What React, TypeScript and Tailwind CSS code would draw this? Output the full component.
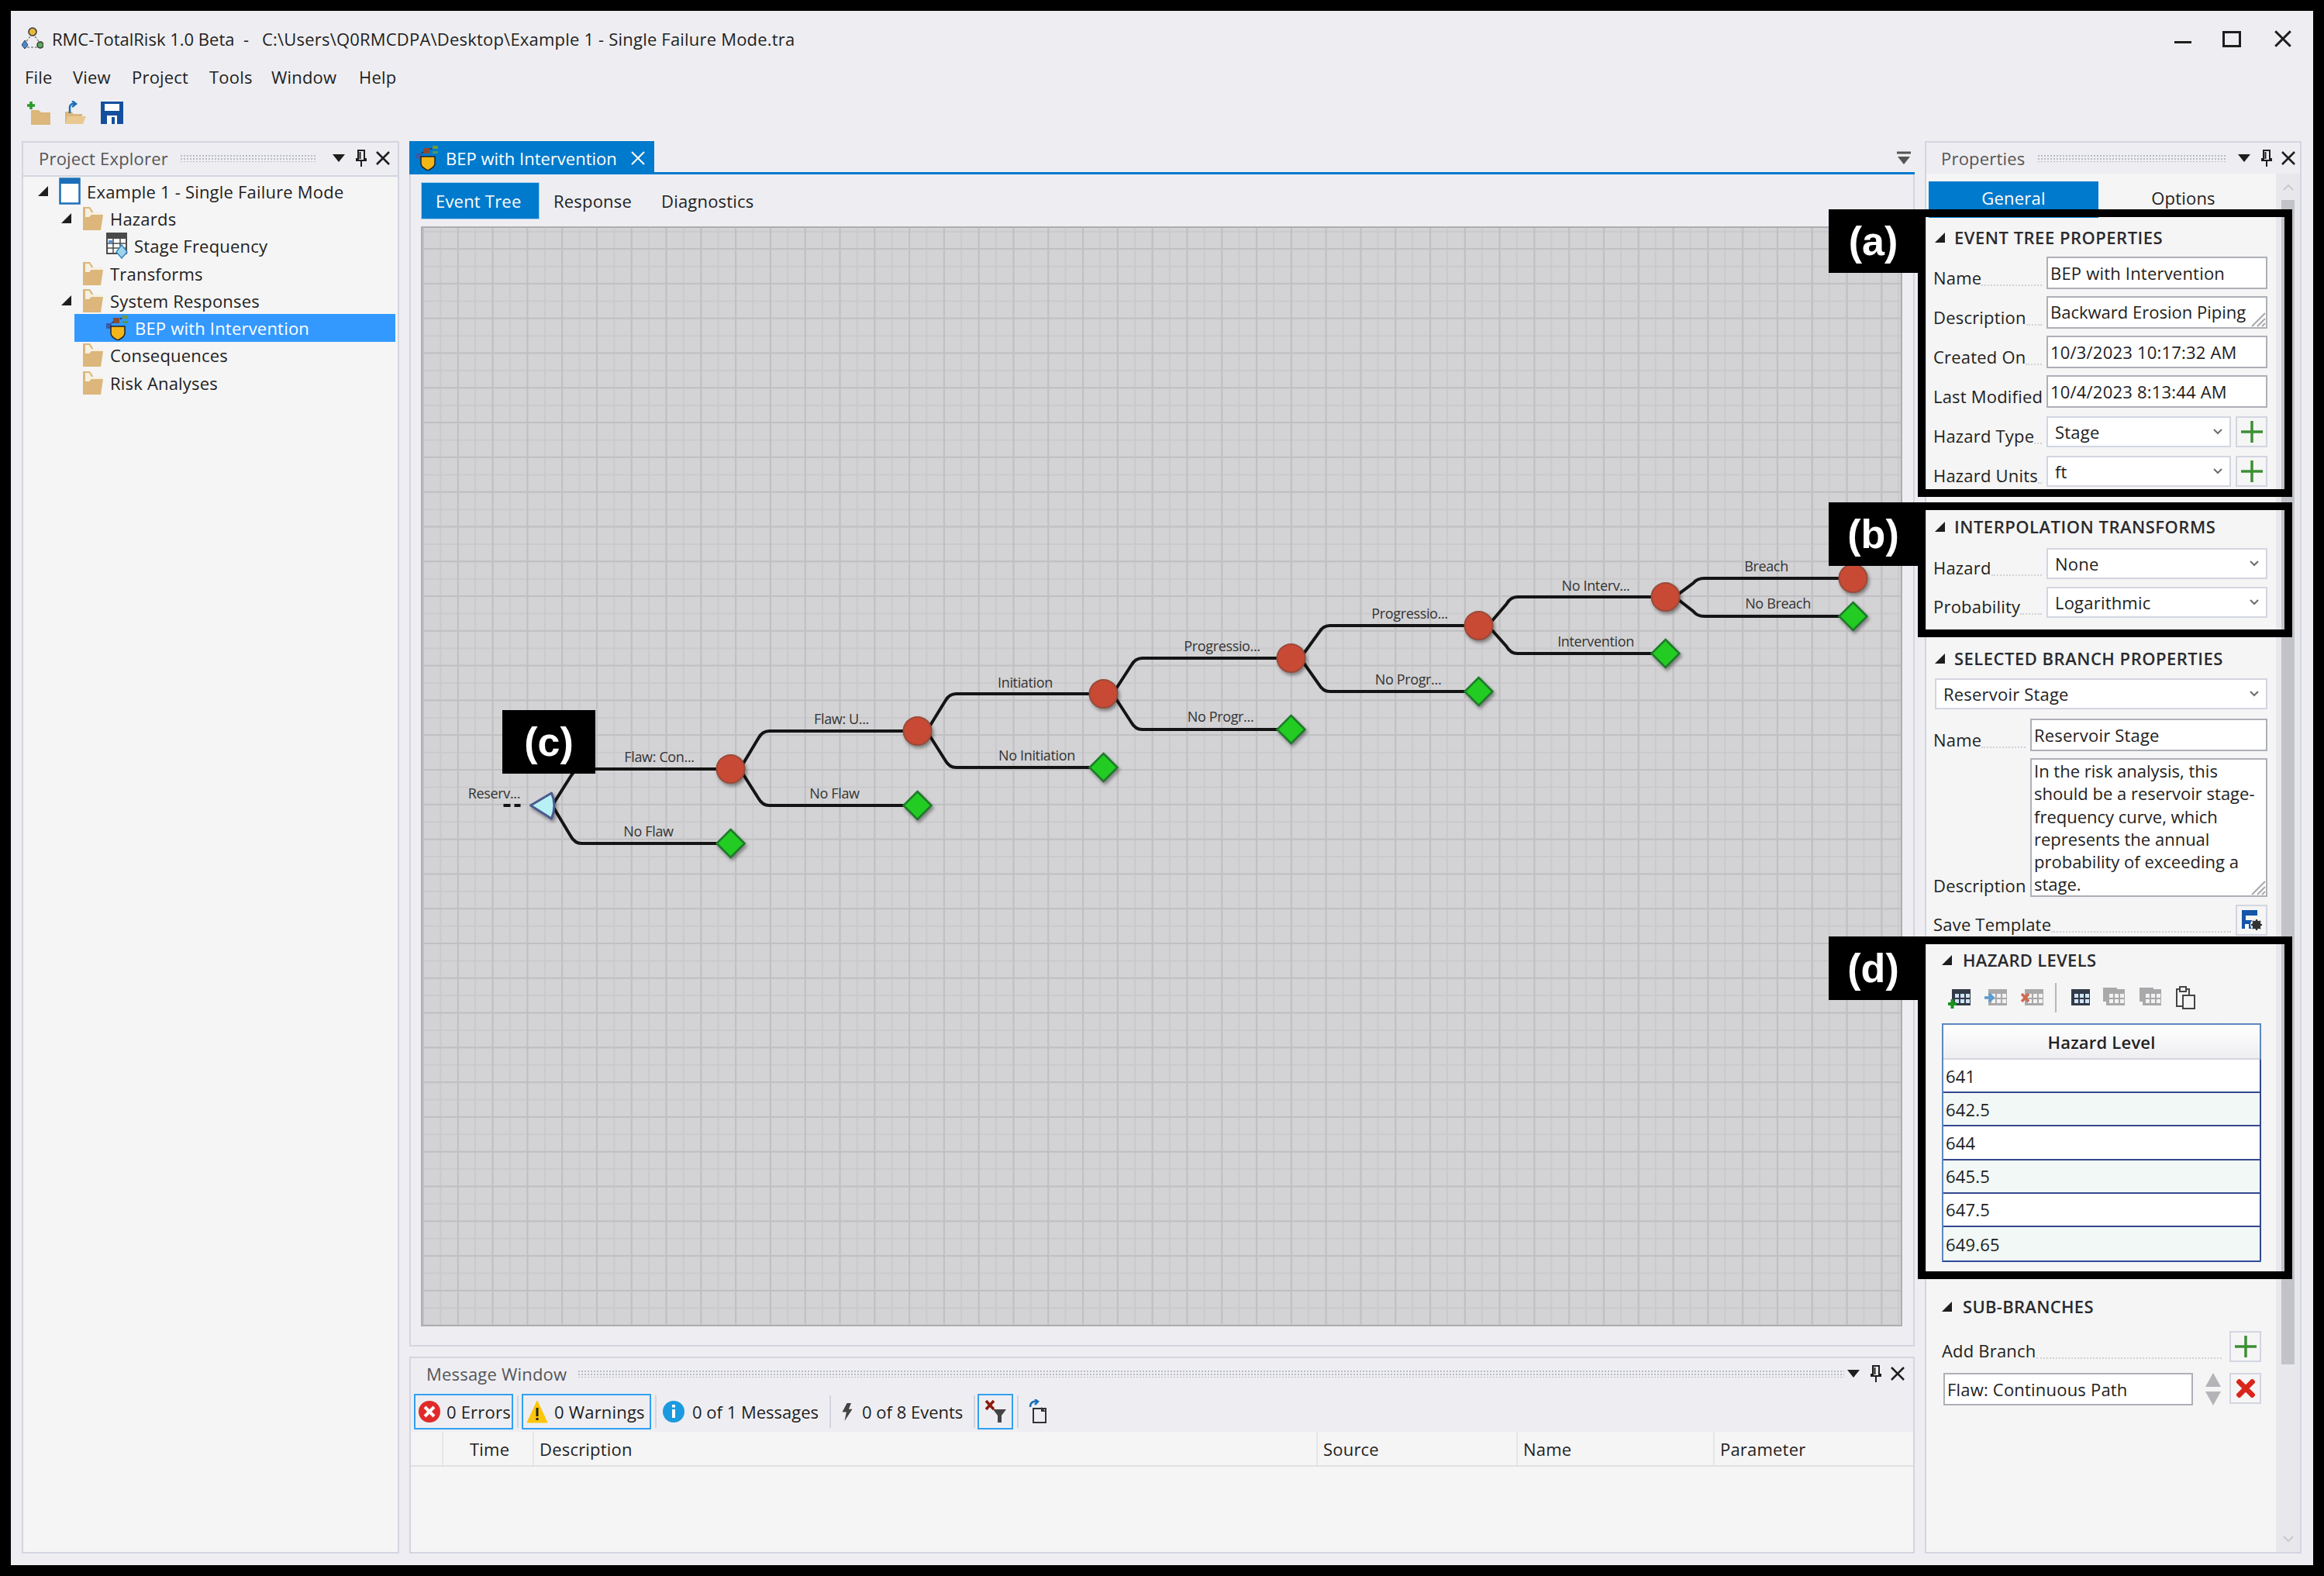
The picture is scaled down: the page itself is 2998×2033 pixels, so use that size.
import React from "react";

const Tri = ({ className = "" }: { className?: string }) => (
  <svg width="13" height="13" viewBox="0 0 13 13" className={className}><polygon points="13,0 13,13 0,13" fill="#1e1e1e" /></svg>
);

const Folder = () => (
  <svg width="28" height="32" viewBox="0 0 28 32" className="shrink-0">
    <path d="M1 1h9l4 6v24H1z" fill="#dcb67a" />
    <path d="M4 3h5l3 5h14v15H4z" fill="#f6f0e2" />
    <path d="M1 31V14h8l3-3h15l-3 20z" fill="#dcb67a" />
  </svg>
);

const WinIcon = () => (
  <svg width="28" height="35" viewBox="0 0 28 35" className="shrink-0">
    <rect x="1.5" y="1.5" width="25" height="32" fill="#fff" stroke="#1b6fb8" strokeWidth="2.5" />
    <rect x="1" y="1" width="26" height="7" fill="#1b6fb8" />
  </svg>
);

const BepIcon = () => (
  <svg width="30" height="32" viewBox="0 0 30 32" className="shrink-0">
    <path d="M3 13L12 6M12 6L22 3" stroke="#222" strokeWidth="1.5" fill="none" strokeDasharray="2 1" />
    <rect x="0" y="10" width="7" height="7" fill="#3b5aa8" />
    <rect x="9" y="3" width="8" height="7" fill="#8a4a32" />
    <rect x="21" y="0" width="7" height="4" fill="#6f9a3c" />
    <rect x="21" y="7" width="7" height="3" fill="#4f9a4f" />
    <path d="M6 14h18v9c0 4-5 7-9 9-4-2-9-5-9-9z" fill="#f3b619" stroke="#222" strokeWidth="1.5" />
  </svg>
);

const StageIcon = () => (
  <svg width="28" height="34" viewBox="0 0 28 34" className="shrink-0">
    <rect x="1" y="1" width="25" height="26" fill="#fff" stroke="#4a4a4a" strokeWidth="2" />
    <rect x="1" y="1" width="25" height="7" fill="#4a4a4a" />
    <path d="M9 8v19M18 8v19M1 14h25M1 20h25" stroke="#4a4a4a" strokeWidth="1.5" />
    <rect x="3" y="10" width="5" height="4" fill="#5b8fd0" />
    <polygon points="20,16 27,25 20,33 13,25" fill="#9fd4ee" stroke="#3b87bb" strokeWidth="1.5" />
  </svg>
);

const AppIcon = () => (
  <svg width="28" height="32" viewBox="0 0 28 32" className="shrink-0">
    <path d="M14 9L4 22M14 9l10 13M7 27h14" stroke="#888" strokeWidth="1.5" strokeDasharray="3 2" />
    <circle cx="14" cy="7" r="5" fill="#e7b93a" stroke="#333" strokeWidth="1.5" />
    <polygon points="4,18 8,24 4,29 0,24" fill="#4f86c6" stroke="#26466d" />
    <circle cx="24" cy="24" r="4" fill="#5ea95e" stroke="#333" strokeWidth="1.5" />
  </svg>
);

const Pin = () => (
  <svg width="14" height="22" viewBox="0 0 14 22"><path d="M3 1h8v11h2v2H1v-2h2zM5.5 3v9M7 14v8" fill="none" stroke="#1e1e1e" strokeWidth="2" /></svg>
);
const XMark = ({ size = 18, color = "#1e1e1e", w = 2.5 }: { size?: number; color?: string; w?: number }) => (
  <svg width={size} height={size} viewBox="0 0 18 18"><path d="M1 1l16 16M17 1L1 17" stroke={color} strokeWidth={w} /></svg>
);
const Grip = ({ className = "" }: { className?: string }) => (
  <div className={`h-[10px] bg-[radial-gradient(#b9bcc4_1px,transparent_1px)] bg-[size:4px_4px] ${className}`} />
);

const HeaderIcons = () => (
  <div className="flex items-center">
    <svg width="16" height="10" viewBox="0 0 16 10"><polygon points="0,0 16,0 8,10" fill="#1e1e1e" /></svg>
    <span className="ml-[14px] flex"><Pin /></span>
    <span className="ml-[12px] flex"><XMark size={18} /></span>
  </div>
);

const Chevron = () => (
  <svg width="12" height="8" viewBox="0 0 12 8" className="shrink-0"><path d="M1 1l5 5 5-5" fill="none" stroke="#6d6d6d" strokeWidth="2" /></svg>
);

const Plus = () => (
  <svg width="28" height="28" viewBox="0 0 28 28"><path d="M14 0v28M0 14h28" stroke="#3c8f34" strokeWidth="3.5" /></svg>
);

const SquareBtn = ({ children, className = "" }: { children: React.ReactNode; className?: string }) => (
  <div className={`w-[41px] h-[40px] border-2 border-[#d3d5e2] bg-[#f5f5f5] flex items-center justify-center shrink-0 ${className}`}>{children}</div>
);

const Input = ({ children, className = "" }: { children: React.ReactNode; className?: string }) => (
  <div className={`h-[42px] border-2 border-[#aeb0b8] bg-white pl-[3px] flex items-center whitespace-nowrap overflow-hidden ${className}`}>{children}</div>
);

const Resize = () => (
  <svg width="22" height="22" viewBox="0 0 22 22" className="absolute right-0 bottom-0"><path d="M21 4L4 21M21 11L11 21M21 17L17 21" stroke="#a8a8a8" strokeWidth="2" /></svg>
);

const Combo = ({ children, className = "" }: { children: React.ReactNode; className?: string }) => (
  <div className={`h-[40px] border-2 border-[#d3d5e2] bg-white pl-[9px] pr-[9px] flex items-center justify-between whitespace-nowrap ${className}`}>
    <span>{children}</span>
    <Chevron />
  </div>
);

const Leader = () => <span className="flex-1 min-w-0 mb-[4px] border-b-2 border-dotted border-[#d2d2d6]" />;

const Field = ({ label, h = "h-[42px]", w = "w-[146px]", mt = "mt-[9px]", children }: { label: string; h?: string; w?: string; mt?: string; children: React.ReactNode }) => (
  <div className={`flex items-end ${h} ${mt}`}>
    <div className={`${w} shrink-0 flex items-end pr-[6px] whitespace-nowrap -ml-[2px]`}>
      <span>{label}</span>
      <Leader />
    </div>
    {children}
  </div>
);

const SecTitle = ({ children, className = "h-[50px]" }: { children: React.ReactNode; className?: string }) => (
  <div className={`flex items-center font-semibold text-[#2a2a2e] tracking-[0.5px] ${className}`}>
    <Tri className="mr-[12px]" />
    <span>{children}</span>
  </div>
);

const Frame = ({ label, inset }: { label: string; inset: string }) => (
  <div className={`absolute z-10 border-[10px] border-black pointer-events-none ${inset}`}>
    <div className="absolute right-full -top-[10px] w-[125px] h-[82px] pr-[10px] bg-black text-white flex items-center justify-center [font-family:'Liberation_Sans',sans-serif] font-bold text-[52px] leading-none tracking-normal">
      {label}
    </div>
  </div>
);

type TreeRowProps = { pad: string; tri?: boolean; icon: React.ReactNode; text: string; selected?: boolean; gap?: string };
const TreeRow = ({ pad, tri, icon, text, selected, gap = "ml-[8px]" }: TreeRowProps) => (
  <div className={`h-[35.3px] flex items-center whitespace-nowrap relative ${pad}`}>
    {selected && <div className="absolute left-[66px] right-[3px] top-0 bottom-0 bg-[#3399ff]" />}
    <span className="w-[13px] shrink-0 mr-[14px] relative">{tri && <Tri className="block" />}</span>
    <span className="relative flex items-center">{icon}</span>
    <span className={`relative ${gap} ${selected ? "text-white" : ""}`}>{text}</span>
  </div>
);

const ProjectExplorer = () => (
  <div className="w-[487px] shrink-0 flex flex-col border-2 border-[#d3d5e0]">
    <div className="h-[42px] pl-[20px] pr-[10px] pb-[2px] flex items-center text-[#555558] shrink-0">
      <span className="whitespace-nowrap">Project Explorer</span>
      <Grip className="flex-1 ml-[15px] mr-[22px]" />
      <HeaderIcons />
    </div>
    <div className="flex-1 bg-[#f5f5f5] border-t-2 border-[#d3d5e0] pt-[1px]">
      <TreeRow pad="pl-[19px]" tri icon={<WinIcon />} text="Example 1 - Single Failure Mode" />
      <TreeRow pad="pl-[49px]" tri icon={<Folder />} text="Hazards" />
      <TreeRow pad="pl-[80px]" icon={<StageIcon />} text="Stage Frequency" />
      <TreeRow pad="pl-[49px]" icon={<Folder />} text="Transforms" />
      <TreeRow pad="pl-[49px]" tri icon={<Folder />} text="System Responses" />
      <TreeRow pad="pl-[80px]" icon={<BepIcon />} text="BEP with Intervention" selected gap="ml-[7px]" />
      <TreeRow pad="pl-[49px]" icon={<Folder />} text="Consequences" />
      <TreeRow pad="pl-[49px]" icon={<Folder />} text="Risk Analyses" />
    </div>
  </div>
);

const circles: [number, number][] = [[942, 992], [1183, 943], [1423, 895], [1665, 849], [1907, 807], [2148, 770], [2390, 746]];
const diamonds: [number, number][] = [[942, 1088], [1183, 1039], [1423, 990], [1665, 941], [1907, 892], [2148, 843], [2390, 795]];
const parents: [number, number][] = [[700, 1039], ...circles.slice(0, 6)];
const labels: [string, number, number][] = [
  ["Reserv...", 637, 1023],
  ["Flaw: Con...", 850, 976],
  ["No Flaw", 836, 1072],
  ["Flaw: U...", 1085, 927],
  ["No Flaw", 1076, 1023],
  ["Initiation", 1322, 880],
  ["No Initiation", 1337, 974],
  ["Progressio...", 1576, 833],
  ["No Progr...", 1574, 924],
  ["Progressio...", 1818, 791],
  ["No Progr...", 1816, 876],
  ["No Interv...", 2058, 755],
  ["Intervention", 2058, 827],
  ["Breach", 2278, 730],
  ["No Breach", 2293, 778],
];

const branch = (px: number, py: number, tx: number, ty: number) => {
  const s = ty < py ? 1 : -1;
  const d = Math.abs(ty - py);
  const k = Math.min(9, d / 4);
  return `M${px + 12} ${py} L${px + 36} ${ty + s * k} Q${px + 41} ${ty} ${px + 50} ${ty} L${tx} ${ty}`;
};

const Tree = () => (
  <svg viewBox="545 294 1906 1415" className="absolute inset-0 w-full h-full">
    <g fill="none" stroke="#141414" strokeWidth="4">
      {parents.map(([px, py], i) => (
        <g key={i}>
          <path d={branch(px, py, circles[i][0], circles[i][1])} />
          <path d={branch(px, py, diamonds[i][0], diamonds[i][1])} />
        </g>
      ))}
      <path d="M649 1039h9M663 1039h8" strokeWidth="4" />
    </g>
    <g className="drop-shadow-[2px_3px_2px_rgba(0,0,0,0.4)]">
      <path d="M684 1039L711 1023Q718 1039 711 1056Z" fill="#b8f1f5" stroke="#4a5a90" strokeWidth="3" strokeLinejoin="round" />
      {circles.map(([x, y], i) => (
        <circle key={i} cx={x} cy={y} r="18" fill="#c84a34" stroke="#9a4a3a" strokeWidth="2" />
      ))}
      {diamonds.map(([x, y], i) => (
        <polygon key={i} points={`${x},${y - 18} ${x + 18},${y} ${x},${y + 18} ${x - 18},${y}`} fill="#22cc22" stroke="#1e7a2a" strokeWidth="2.5" />
      ))}
    </g>
    {labels.map(([t, x, y], i) => (
      <text key={i} x={x} y={y} textAnchor="middle" dominantBaseline="central" className="text-[18px] tracking-[-0.35px] fill-[#333]">{t}</text>
    ))}
  </svg>
);

const DocPanel = () => (
  <div className="h-[1512px] shrink-0 border-x-2 border-b-2 border-[#d3d5e0] pt-[10px] pl-[13px] pr-[14px] flex flex-col">
    <div className="flex items-stretch h-[48px] shrink-0 whitespace-nowrap">
      <div className="w-[153px] bg-[#007acc] text-white border border-[#a5cfee] flex items-center pl-[18px]">Event Tree</div>
      <div className="w-[139px] pl-[18px] flex items-center">Response</div>
      <div className="ml-[18px] flex items-center">Diagnostics</div>
    </div>
    <div className="relative mt-[9px] h-[1419px] w-[1911px] border-2 border-[#aeaeb0] bg-[#d3d3d5] bg-[linear-gradient(#c0c0c2_2px,transparent_2px),linear-gradient(90deg,#c0c0c2_2px,transparent_2px),linear-gradient(#cacacc_2px,transparent_2px),linear-gradient(90deg,#cacacc_2px,transparent_2px)] bg-[size:44.8px_44.8px,44.8px_44.8px,22.4px_22.4px,22.4px_22.4px] bg-[position:0_26px,0_0,0_4px,0_0]">
      <Tree />
      <div className="absolute left-[103px] top-[622px] w-[120px] h-[82px] bg-black text-white flex items-center justify-center [font-family:'Liberation_Sans',sans-serif] font-bold text-[52px] leading-none tracking-normal">(c)</div>
    </div>
  </div>
);

const Sep = ({ className = "" }: { className?: string }) => <div className={`w-[2px] h-[42px] bg-[#d3d5e0] shrink-0 ${className}`} />;

const MessageWindow = () => (
  <div className="flex-1 mt-[13px] border-2 border-[#d3d5e0] flex flex-col min-h-0">
    <div className="h-[43px] shrink-0 pl-[20px] pr-[11px] pb-[3px] flex items-center text-[#555558]">
      <span className="whitespace-nowrap">Message Window</span>
      <Grip className="flex-1 ml-[14px] mr-[4px]" />
      <HeaderIcons />
    </div>
    <div className="h-[52px] shrink-0 flex items-center pl-[4px] whitespace-nowrap">
      <div className="w-[128px] h-[46px] border-2 border-[#33a0f0] flex items-center pl-[4px]">
        <svg width="28" height="28" viewBox="0 0 28 28"><circle cx="14" cy="14" r="14" fill="#e02a2a" /><path d="M8 8l12 12M20 8L8 20" stroke="#fff" strokeWidth="4" /></svg>
        <span className="ml-[8px]">0 Errors</span>
      </div>
      <Sep className="ml-[5px]" />
      <div className="ml-[4px] w-[167px] h-[46px] border-2 border-[#33a0f0] flex items-center pl-[4px]">
        <svg width="28" height="30" viewBox="0 0 28 30"><polygon points="14,1 27,29 1,29" fill="#fdc60a" stroke="#fdc60a" strokeLinejoin="round" /><path d="M14 10v11M14 23v3" stroke="#222" strokeWidth="3" /></svg>
        <span className="ml-[8px]">0 Warnings</span>
      </div>
      <Sep className="ml-[5px]" />
      <svg width="28" height="28" viewBox="0 0 28 28" className="ml-[8px]"><circle cx="14" cy="14" r="14" fill="#1b9ae0" /><path d="M14 11v11M14 5v3.5" stroke="#fff" strokeWidth="4" /></svg>
      <span className="ml-[10px] w-[162px] tracking-normal">0 of 1 Messages</span>
      <Sep className="ml-[15px]" />
      <svg width="16" height="23" viewBox="0 0 17 30" className="ml-[13px]"><polygon points="8,0 15,0 11,10 17,10 4,30 7,15 0,15" fill="#444" /></svg>
      <span className="ml-[11px] w-[128px] tracking-normal">0 of 8 Events</span>
      <Sep className="ml-[16px]" />
      <div className="ml-[3px] w-[46px] h-[46px] border-2 border-[#33a0f0] flex items-center justify-center">
        <svg width="30" height="30" viewBox="0 0 30 30"><path d="M3 1l10 11M13 1L3 12" stroke="#8b1a0c" strokeWidth="3.5" /><polygon points="12,12 29,12 23,20 23,29 18,29 18,20" fill="#444" /></svg>
      </div>
      <Sep className="ml-[5px]" />
      <svg width="26" height="32" viewBox="0 0 26 32" className="ml-[13px]"><path d="M6 12h16v18H6z" fill="none" stroke="#333" strokeWidth="2" /><path d="M16 10l6 6h-6z" fill="#333" /><path d="M2 10c0-6 4-8 9-7M8 0l4 3-4 4" fill="none" stroke="#1b6fb8" strokeWidth="2.5" /></svg>
    </div>
    <div className="flex-1 bg-[#f5f5f5] min-h-0">
      <div className="h-[45px] flex items-stretch border-b-2 border-[#e1e1e4] whitespace-nowrap">
        <div className="w-[42px] border-r-2 border-[#e6e6e8]" />
        <div className="w-[117px] border-r-2 border-[#e6e6e8] flex items-center pl-[34px]">Time</div>
        <div className="w-[1011px] border-r-2 border-[#e6e6e8] flex items-center pl-[7px]">Description</div>
        <div className="w-[258px] border-r-2 border-[#e6e6e8] flex items-center pl-[7px]">Source</div>
        <div className="w-[254px] border-r-2 border-[#e6e6e8] flex items-center pl-[7px]">Name</div>
        <div className="flex-1 flex items-center pl-[7px]">Parameter</div>
      </div>
    </div>
  </div>
);

const CenterColumn = () => (
  <div className="w-[1942px] shrink-0 flex flex-col">
    <div className="h-[43px] shrink-0 flex relative border-b-[3px] border-[#007acc]">
      <div className="w-[316px] h-[43px] shrink-0 bg-[#007acc] text-white flex items-center pl-[9px] whitespace-nowrap">
        <BepIcon />
        <span className="ml-[8px] w-[220px] tracking-normal">BEP with Intervention</span>
        <span className="ml-[19px] flex"><XMark size={18} color="#fff" w={2} /></span>
      </div>
      <svg width="22" height="18" viewBox="0 0 22 18" className="absolute right-[3px] top-[13px]"><path d="M2 2h18" stroke="#555" strokeWidth="3" /><polygon points="3,7 19,7 11,17" fill="#555" /></svg>
    </div>
    <DocPanel />
    <MessageWindow />
  </div>
);

const TableIcon = ({ color = "#333a48", cell = "#cfe3f8", badge, faded, stacked }: { color?: string; cell?: string; badge?: React.ReactNode; faded?: boolean; stacked?: boolean }) => {
  const ink = faded ? "#a9a9ab" : color;
  const cols = [9, 16, 23];
  const rows = [9, 16];
  return (
    <svg width="30" height="28" viewBox="0 0 30 28" className="shrink-0">
      {stacked && <path d="M1 1h18v4H5v14H1z" fill={ink} />}
      <rect x="5" y="3" width="24" height="21" fill={ink} />
      {cols.map((x) =>
        rows.map((y) => <rect key={`${x}-${y}`} x={x} y={y} width="5" height="5" fill={faded ? "#f2f2f2" : cell} />)
      )}
      {badge}
    </svg>
  );
};

const PropertyPanel = () => (
  <div className="w-[486px] shrink-0 flex flex-col border-2 border-[#d3d5e0] relative">
    <div className="h-[40px] shrink-0 pl-[19px] pr-[6px] flex items-center text-[#555558]">
      <span>Properties</span>
      <Grip className="flex-1 ml-[15px] mr-[16px]" />
      <HeaderIcons />
    </div>
    <div className="flex-1 flex min-h-0">
      <div className="w-[451px] shrink-0 bg-[#f5f5f5] flex flex-col">
        <div className="h-[57px] shrink-0 flex pt-[10px] pl-[3px] pr-[10px]">
          <div className="w-[219px] h-[47px] pb-[5px] bg-[#007acc] text-white flex items-center justify-center">General</div>
          <div className="w-[219px] h-[47px] pb-[5px] flex items-center justify-center">Options</div>
        </div>

        <section className="relative h-[350px] px-[11px]">
          <Frame label="(a)" inset="-left-[11px] -right-[21px] -top-[11px] -bottom-[10px]" />
          <SecTitle>EVENT TREE PROPERTIES</SecTitle>
          <Field label="Name" mt=""><Input className="flex-1">BEP with Intervention</Input></Field>
          <Field label="Description"><Input className="flex-1 relative pb-[3px] tracking-normal">Backward Erosion Piping<Resize /></Input></Field>
          <Field label="Created On"><Input className="flex-1">10/3/2023 10:17:32 AM</Input></Field>
          <Field label="Last Modified"><Input className="flex-1">10/4/2023 8:13:44 AM</Input></Field>
          <Field label="Hazard Type">
            <Combo className="flex-1">Stage</Combo>
            <SquareBtn className="ml-[6px]"><Plus /></SquareBtn>
          </Field>
          <Field label="Hazard Units" h="h-[41px]" mt="mt-[10px]">
            <Combo className="flex-1">ft</Combo>
            <SquareBtn className="ml-[6px]"><Plus /></SquareBtn>
          </Field>
        </section>

        <section className="relative mt-[27px] h-[154px] px-[11px]">
          <Frame label="(b)" inset="-left-[11px] -right-[21px] -top-[10px] -bottom-[10px]" />
          <SecTitle className="h-[42px] mb-[7px]">INTERPOLATION TRANSFORMS</SecTitle>
          <Field label="Hazard" h="h-[40px]" mt=""><Combo className="flex-1">None</Combo></Field>
          <Field label="Probability" h="h-[40px]" mt="mt-[10px]"><Combo className="flex-1">Logarithmic</Combo></Field>
        </section>

        <section className="mt-[13px] h-[393px] px-[11px]">
          <SecTitle className="h-[48px] mb-[2px]">SELECTED BRANCH PROPERTIES</SecTitle>
          <Combo>Reservoir Stage</Combo>
          <Field label="Name" w="w-[125px]" mt="mt-[12px]"><Input className="flex-1">Reservoir Stage</Input></Field>
          <Field label="Description" w="w-[125px]" h="h-[179px]">
            <div className="relative flex-1 h-[179px] border-2 border-[#aeb0b8] bg-white pl-[3px] leading-[29.3px] tracking-normal whitespace-nowrap">
              <div>In the risk analysis, this</div>
              <div>should be a reservoir stage-</div>
              <div>frequency curve, which</div>
              <div>represents the annual</div>
              <div>probability of exceeding a</div>
              <div>stage.</div>
              <Resize />
            </div>
          </Field>
          <div className="flex items-end h-[40px] mt-[10px] -ml-[2px]">
            <span className="whitespace-nowrap">Save Template</span>
            <Leader />
            <SquareBtn className="ml-[6px]">
              <svg width="30" height="30" viewBox="0 0 30 30"><path d="M2 2h20v7H7v6h14v1H2z" fill="#1456a8" /><rect x="2" y="16" width="14" height="10" fill="#1456a8" /><rect x="6" y="20" width="5" height="6" fill="#fff" /><circle cx="21" cy="21" r="8" fill="#f5f5f5" /><circle cx="21" cy="21" r="4" fill="none" stroke="#333" strokeWidth="3.5" /><path d="M21 14v14M14 21h14M16 16l10 10M26 16L16 26" stroke="#333" strokeWidth="2" /></svg>
            </SquareBtn>
          </div>
        </section>

        <section className="relative h-[422px]">
          <Frame label="(d)" inset="-left-[11px] -right-[21px] -top-[10px] -bottom-[10px]" />
          <div className="h-[40px] pl-[20px] flex items-center font-semibold text-[#2a2a2e] tracking-[0.3px]">
            <Tri className="mr-[14px]" />
            <span>HAZARD LEVELS</span>
          </div>
          <div className="h-[38px] mt-[10px] ml-[28px] flex items-center">
            <TableIcon badge={<path d="M0 22h11M5.5 16v12" stroke="#17931f" strokeWidth="4" />} />
            <span className="ml-[17px] flex"><TableIcon faded badge={<path d="M0 14h8M6 9l5 5-5 5" stroke="#5b9bd0" strokeWidth="3.5" fill="none" />} /></span>
            <span className="ml-[17px] flex"><TableIcon faded badge={<path d="M1 9l9 10M10 9L1 19" stroke="#cf6a52" strokeWidth="3.5" />} /></span>
            <div className="w-[2px] h-[38px] bg-[#b8b8bc] ml-[14px] mr-[14px]" />
            <TableIcon />
            <span className="ml-[15px] flex"><TableIcon faded stacked /></span>
            <span className="ml-[17px] flex"><TableIcon faded stacked /></span>
            <svg width="26" height="30" viewBox="0 0 26 30" className="ml-[17px]"><path d="M2 4h16v22H2z" fill="none" stroke="#444" strokeWidth="2" /><rect x="6" y="1" width="8" height="6" fill="#f5f5f5" stroke="#444" strokeWidth="2" /><rect x="10" y="12" width="15" height="17" fill="#f5f5f5" stroke="#444" strokeWidth="2" /></svg>
          </div>
          <div className="ml-[20px] w-[412px] mt-[14px] border-2 border-[#5b88c0] border-b-[#2f4a9a]">
            <div className="h-[45px] bg-[linear-gradient(#ffffff,#eeeef2)] flex items-center justify-center font-semibold text-[#222] border-b-2 border-[#d3d5e0]">Hazard Level</div>
            {["641", "642.5", "644", "645.5", "647.5", "649.65"].map((v, i) => (
              <div key={v} className={`h-[43.2px] pl-[3px] flex items-center border-r-2 border-r-[#33488f] -mr-[2px] ${i < 5 ? "border-b-2 border-b-[#33488f]" : ""} ${i % 2 ? "bg-[#f2f8f6]" : "bg-white"}`}>{v}</div>
            ))}
          </div>
        </section>

        <section className="mt-[15px] px-[20px] flex-1">
          <div className="h-[60px] flex items-center font-semibold text-[#2a2a2e] tracking-[0.3px]">
            <Tri className="mr-[14px]" />
            <span>SUB-BRANCHES</span>
          </div>
          <div className="flex items-end h-[40px] w-[412px] mt-[2px]">
            <span className="whitespace-nowrap">Add Branch</span>
            <Leader />
            <SquareBtn className="ml-[10px]"><Plus /></SquareBtn>
          </div>
          <div className="flex items-start mt-[14px] w-[412px]">
            <Input className="w-[322px] ml-[2px]">Flaw: Continuous Path</Input>
            <svg width="20" height="42" viewBox="0 0 20 42" className="ml-[16px]"><polygon points="10,0 20,18 0,18" fill="#b4b4b8" /><polygon points="10,42 20,24 0,24" fill="#b4b4b8" /></svg>
            <SquareBtn className="ml-[11px]"><XMark size={24} color="#d9261c" w={5} /></SquareBtn>
          </div>
        </section>
      </div>
      <div className="w-[31px] shrink-0 bg-[#e8e8ec] flex flex-col items-center">
        <svg width="14" height="9" viewBox="0 0 14 9" className="mt-[13px]"><path d="M1 8l6-6 6 6" fill="none" stroke="#c9c9ce" strokeWidth="2" /></svg>
        <div className="w-[17px] h-[1502px] mt-[12px] bg-[#c2c3c9]" />
        <div className="flex-1" />
        <svg width="14" height="9" viewBox="0 0 14 9" className="mb-[12px]"><path d="M1 1l6 6 6-6" fill="none" stroke="#c9c9ce" strokeWidth="2" /></svg>
      </div>
    </div>
  </div>
);

export default function App() {
  return (
    <div className="w-[2998px] h-[2033px] bg-black p-[14px] overflow-hidden [font-family:'Open_Sans',sans-serif] text-[22px] leading-[30px] tracking-[0.2px] text-[#1e1e1e]">
      <div className="w-[2970px] h-[2005px] bg-[#eeeef2] flex flex-col">
        <div className="h-[60px] shrink-0 flex items-center pl-[14px] pr-[28px] pt-[12px]">
          <AppIcon />
          <span className="ml-[11px] w-[271px] whitespace-nowrap tracking-normal">RMC-TotalRisk 1.0 Beta&nbsp;&nbsp;-</span>
          <span className="whitespace-nowrap">C:\Users\Q0RMCDPA\Desktop\Example 1 - Single Failure Mode.tra</span>
          <div className="ml-auto flex items-center">
            <div className="w-[22px] h-[3px] bg-[#1e1e1e] mt-[8px]" />
            <div className="w-[24px] h-[21px] border-[3px] border-[#1e1e1e] ml-[40px]" />
            <span className="ml-[43px] flex"><XMark size={22} w={2.5} /></span>
          </div>
        </div>
        <div className="h-[36px] mt-[7px] shrink-0 flex items-center pl-[18px] whitespace-nowrap">
          <span className="w-[62px]">File</span>
          <span className="w-[76px]">View</span>
          <span className="w-[100px]">Project</span>
          <span className="w-[80px]">Tools</span>
          <span className="w-[113px]">Window</span>
          <span>Help</span>
        </div>
        <div className="h-[65px] shrink-0 flex items-center pl-[21px] pb-[8px]">
          <svg width="32" height="30" viewBox="0 0 32 30"><path d="M5 0v10M0 5h10" stroke="#2b9a2b" strokeWidth="3.5" /><path d="M5 11h10l3 3h12v16H5z" fill="#dcb67a" /></svg>
          <svg width="30" height="32" viewBox="0 0 30 32" className="ml-[15px]"><path d="M2 14h8l3 3h11v13H2z" fill="#dcb67a" /><path d="M5 20h24l-4 10H2z" fill="#e9c991" /><path d="M8 16V8c0-3 3-5 7-4M11 0l5 4-5 4" fill="none" stroke="#1b6fb8" strokeWidth="2.5" /></svg>
          <svg width="29" height="29" viewBox="0 0 29 29" className="ml-[18px]"><path d="M0 0h29v29H0z" fill="#14509e" /><rect x="5" y="3" width="19" height="9" fill="#fff" /><rect x="8" y="18" width="13" height="11" fill="#fff" /><rect x="14" y="20" width="4" height="9" fill="#14509e" /></svg>
        </div>
        <div className="flex-1 min-h-0 flex pl-[14px] pr-[15px] pb-[15px] gap-[13px]">
          <ProjectExplorer />
          <CenterColumn />
          <PropertyPanel />
        </div>
      </div>
    </div>
  );
}
